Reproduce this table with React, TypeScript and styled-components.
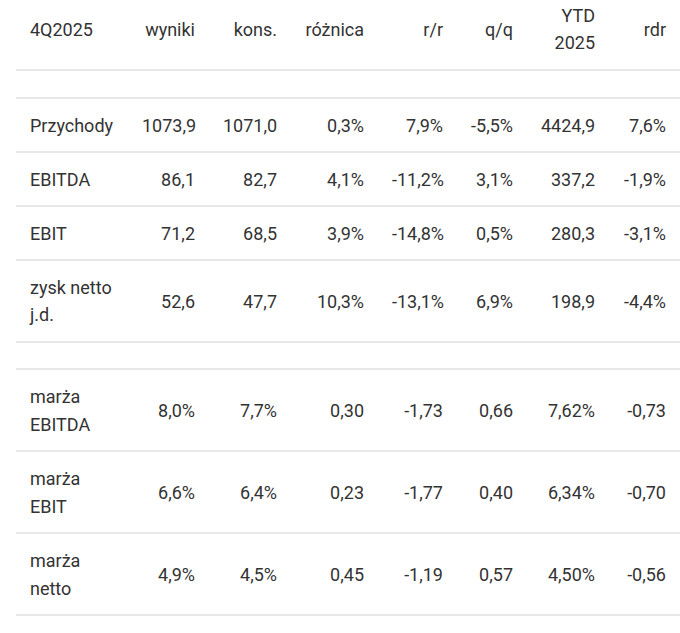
import React from 'react'
import styled, { createGlobalStyle } from 'styled-components'

const GlobalStyle = createGlobalStyle`
  html, body {
    margin: 0;
    padding: 0;
    background: #fff;
  }
  body {
    font-family: Roboto, "Noto Sans", "Liberation Sans", sans-serif;
    color: #333;
  }
`

const Wrap = styled.div`
  width: 680px;
  padding-left: 16px;
  box-sizing: border-box;
`

const Table = styled.table`
  width: 664px;
  table-layout: fixed;
  border-collapse: collapse;
  font-size: 18px;
  line-height: 27px;
`

const HeadCell = styled.th<{ $left?: boolean }>`
  font-weight: 400;
  text-align: ${({ $left }) => ($left ? 'left' : 'right')};
  vertical-align: middle;
  padding: 2px 14px 13px;
  border-bottom: 2px solid #e8e8e8;
`

const Row = styled.tr`
  border-bottom: 2px solid #e8e8e8;
`

const Cell = styled.td<{ $left?: boolean }>`
  text-align: ${({ $left }) => ($left ? 'left' : 'right')};
  vertical-align: middle;
  padding: 13px 14px 12px;
  white-space: nowrap;
`

const EmptyCell = styled.td`
  padding: 13px 0 12.5px;
`

const Label = styled.div<{ $double: boolean }>`
  line-height: ${({ $double }) => ($double ? '27.5px' : '27px')};
`

const widths = [112, 81, 82, 87, 79, 70, 82, 71]

type Line = { label: string[]; values: string[] } | null

const rows: Line[] = [
  null,
  { label: ['Przychody'], values: ['1073,9', '1071,0', '0,3%', '7,9%', '-5,5%', '4424,9', '7,6%'] },
  { label: ['EBITDA'], values: ['86,1', '82,7', '4,1%', '-11,2%', '3,1%', '337,2', '-1,9%'] },
  { label: ['EBIT'], values: ['71,2', '68,5', '3,9%', '-14,8%', '0,5%', '280,3', '-3,1%'] },
  { label: ['zysk netto', 'j.d.'], values: ['52,6', '47,7', '10,3%', '-13,1%', '6,9%', '198,9', '-4,4%'] },
  null,
  { label: ['marża', 'EBITDA'], values: ['8,0%', '7,7%', '0,30', '-1,73', '0,66', '7,62%', '-0,73'] },
  { label: ['marża', 'EBIT'], values: ['6,6%', '6,4%', '0,23', '-1,77', '0,40', '6,34%', '-0,70'] },
  { label: ['marża', 'netto'], values: ['4,9%', '4,5%', '0,45', '-1,19', '0,57', '4,50%', '-0,56'] },
]

const lines = (parts: string[]) =>
  parts.map((p, i) => (
    <React.Fragment key={i}>
      {i > 0 && <br />}
      {p}
    </React.Fragment>
  ))

export default function App() {
  return (
    <>
      <GlobalStyle />
      <Wrap>
        <Table>
          <colgroup>
            {widths.map((w, i) => (
              <col key={i} style={{ width: w }} />
            ))}
          </colgroup>
          <thead>
            <tr>
              <HeadCell $left>4Q2025</HeadCell>
              <HeadCell>wyniki</HeadCell>
              <HeadCell>kons.</HeadCell>
              <HeadCell>różnica</HeadCell>
              <HeadCell>r/r</HeadCell>
              <HeadCell>q/q</HeadCell>
              <HeadCell>{lines(['YTD', '2025'])}</HeadCell>
              <HeadCell>rdr</HeadCell>
            </tr>
          </thead>
          <tbody>
            {rows.map((r, i) =>
              r === null ? (
                <Row key={i}>
                  {widths.map((_, j) => (
                    <EmptyCell key={j} />
                  ))}
                </Row>
              ) : (
                <Row key={i}>
                  <Cell $left>
                    <Label $double={r.label.length > 1}>{lines(r.label)}</Label>
                  </Cell>
                  {r.values.map((v, j) => (
                    <Cell key={j}>{v}</Cell>
                  ))}
                </Row>
              )
            )}
          </tbody>
        </Table>
      </Wrap>
    </>
  )
}
